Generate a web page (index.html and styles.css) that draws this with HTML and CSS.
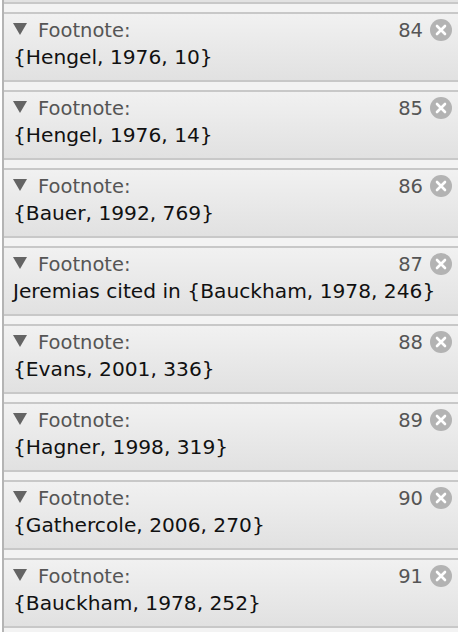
FILE: index.html
```html
<!DOCTYPE html>
<html>
<head>
<meta charset="utf-8">
<link rel="stylesheet" href="styles.css">
</head>
<body>
<div class="panel">
  <div class="stub"></div>
  <div class="item">
    <div class="head"><span class="tri"></span><span class="label">Footnote:</span><span class="num">84</span><span class="close"><svg viewBox="0 0 22 22" width="22" height="22"><circle cx="11" cy="11" r="11" fill="#b3b3b3"/><path d="M7 7 L15 15 M15 7 L7 15" stroke="#fff" stroke-width="2.6" stroke-linecap="round"/></svg></span></div>
    <div class="body">{Hengel, 1976, 10}</div>
  </div>
  <div class="item">
    <div class="head"><span class="tri"></span><span class="label">Footnote:</span><span class="num">85</span><span class="close"><svg viewBox="0 0 22 22" width="22" height="22"><circle cx="11" cy="11" r="11" fill="#b3b3b3"/><path d="M7 7 L15 15 M15 7 L7 15" stroke="#fff" stroke-width="2.6" stroke-linecap="round"/></svg></span></div>
    <div class="body">{Hengel, 1976, 14}</div>
  </div>
  <div class="item">
    <div class="head"><span class="tri"></span><span class="label">Footnote:</span><span class="num">86</span><span class="close"><svg viewBox="0 0 22 22" width="22" height="22"><circle cx="11" cy="11" r="11" fill="#b3b3b3"/><path d="M7 7 L15 15 M15 7 L7 15" stroke="#fff" stroke-width="2.6" stroke-linecap="round"/></svg></span></div>
    <div class="body">{Bauer, 1992, 769}</div>
  </div>
  <div class="item">
    <div class="head"><span class="tri"></span><span class="label">Footnote:</span><span class="num">87</span><span class="close"><svg viewBox="0 0 22 22" width="22" height="22"><circle cx="11" cy="11" r="11" fill="#b3b3b3"/><path d="M7 7 L15 15 M15 7 L7 15" stroke="#fff" stroke-width="2.6" stroke-linecap="round"/></svg></span></div>
    <div class="body">Jeremias cited in {Bauckham, 1978, 246}</div>
  </div>
  <div class="item">
    <div class="head"><span class="tri"></span><span class="label">Footnote:</span><span class="num">88</span><span class="close"><svg viewBox="0 0 22 22" width="22" height="22"><circle cx="11" cy="11" r="11" fill="#b3b3b3"/><path d="M7 7 L15 15 M15 7 L7 15" stroke="#fff" stroke-width="2.6" stroke-linecap="round"/></svg></span></div>
    <div class="body">{Evans, 2001, 336}</div>
  </div>
  <div class="item">
    <div class="head"><span class="tri"></span><span class="label">Footnote:</span><span class="num">89</span><span class="close"><svg viewBox="0 0 22 22" width="22" height="22"><circle cx="11" cy="11" r="11" fill="#b3b3b3"/><path d="M7 7 L15 15 M15 7 L7 15" stroke="#fff" stroke-width="2.6" stroke-linecap="round"/></svg></span></div>
    <div class="body">{Hagner, 1998, 319}</div>
  </div>
  <div class="item">
    <div class="head"><span class="tri"></span><span class="label">Footnote:</span><span class="num">90</span><span class="close"><svg viewBox="0 0 22 22" width="22" height="22"><circle cx="11" cy="11" r="11" fill="#b3b3b3"/><path d="M7 7 L15 15 M15 7 L7 15" stroke="#fff" stroke-width="2.6" stroke-linecap="round"/></svg></span></div>
    <div class="body">{Gathercole, 2006, 270}</div>
  </div>
  <div class="item">
    <div class="head"><span class="tri"></span><span class="label">Footnote:</span><span class="num">91</span><span class="close"><svg viewBox="0 0 22 22" width="22" height="22"><circle cx="11" cy="11" r="11" fill="#b3b3b3"/><path d="M7 7 L15 15 M15 7 L7 15" stroke="#fff" stroke-width="2.6" stroke-linecap="round"/></svg></span></div>
    <div class="body">{Bauckham, 1978, 252}</div>
  </div>
</div>
</body>
</html>
```

FILE: styles.css
```css
html, body {
  margin: 0;
  padding: 0;
  background: #ffffff;
  height: 632px;
  overflow: hidden;
}
.panel {
  margin-left: 2px;
  border-left: 2px solid #b4b4b4;
  background: #f3f3f3;
  height: 632px;
  display: flex;
  flex-direction: column;
  gap: 8px;
  font-family: "DejaVu Sans", Verdana, sans-serif;
}
.stub {
  height: 2px;
  border-bottom: 2px solid #c8c8c8;
  background: #e2e2e2;
  flex: none;
}
.item {
  flex: none;
  height: 66px;
  border-top: 2px solid #c8c8c8;
  border-bottom: 2px solid #c8c8c8;
  background: linear-gradient(#f1f1f1, #e1e1e1);
  display: flex;
  flex-direction: column;
}
.head {
  height: 32px;
  display: flex;
  align-items: center;
  padding: 0 6px 0 9px;
}
.tri {
  width: 0;
  height: 0;
  border-left: 7.5px solid transparent;
  border-right: 7.5px solid transparent;
  border-top: 12px solid #646464;
  margin-right: 11px;
  margin-bottom: 3px;
}
.label {
  font-size: 19.5px;
  color: #555555;
  flex: 1;
}
.num {
  font-size: 19.5px;
  color: #555555;
  margin-right: 7px;
}
.close {
  display: flex;
  width: 22px;
  height: 22px;
}
.body {
  font-size: 20.2px;
  color: #111111;
  padding-left: 9px;
  line-height: 22px;
}
```
